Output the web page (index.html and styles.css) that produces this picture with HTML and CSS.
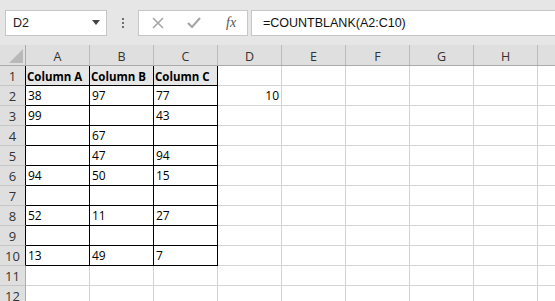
FILE: index.html
```html
<!DOCTYPE html>
<html lang="en">
<head>
<meta charset="UTF-8">
<title>COUNTBLANK</title>
<link rel="stylesheet" href="styles.css">
</head>
<body>
    <div class="toolbar">
        <div class="namebox">
            <span>D2</span>
            <svg class="caret" width="8" height="5" viewBox="0 0 8 5"><path d="M0 0h8L4 5z" fill="#444"/></svg>
        </div>
        <div class="grip"><i></i><i></i><i></i></div>
        <div class="icons">
            <svg width="14" height="14" viewBox="0 0 14 14"><path d="M2 2l10 10M12 2L2 12" stroke="#a6a6a6" stroke-width="1.6"/></svg>
            <svg width="16" height="14" viewBox="0 0 16 14"><path d="M2 7l4 4 8-9" stroke="#a6a6a6" stroke-width="2.2" fill="none"/></svg>
            <span class="fx">fx</span>
        </div>
        <div class="formula">=COUNTBLANK(A2:C10)</div>
    </div>

    <div class="sheet">
        <div class="row head">
            <div class="rh corner"><svg width="16" height="16" viewBox="0 0 16 16"><path d="M16 2V16H2z" fill="#b9b9b9"/></svg></div>
            <div class="c">A</div><div class="c">B</div><div class="c">C</div><div class="c">D</div>
            <div class="c">E</div><div class="c">F</div><div class="c">G</div><div class="c">H</div><div class="c end"></div>
        </div>
        <div class="row">
            <div class="rh in">1</div>
            <div class="c t th">Column A</div><div class="c t th">Column B</div><div class="c t th">Column C</div>
            <div class="c"></div><div class="c"></div><div class="c"></div><div class="c"></div><div class="c"></div><div class="c end"></div>
        </div>
        <div class="row">
            <div class="rh in">2</div>
            <div class="c t">38</div><div class="c t">97</div><div class="c t">77</div>
            <div class="c num">10</div><div class="c"></div><div class="c"></div><div class="c"></div><div class="c"></div><div class="c end"></div>
        </div>
        <div class="row">
            <div class="rh in">3</div>
            <div class="c t">99</div><div class="c t"></div><div class="c t">43</div>
            <div class="c"></div><div class="c"></div><div class="c"></div><div class="c"></div><div class="c"></div><div class="c end"></div>
        </div>
        <div class="row">
            <div class="rh in">4</div>
            <div class="c t"></div><div class="c t">67</div><div class="c t"></div>
            <div class="c"></div><div class="c"></div><div class="c"></div><div class="c"></div><div class="c"></div><div class="c end"></div>
        </div>
        <div class="row">
            <div class="rh in">5</div>
            <div class="c t"></div><div class="c t">47</div><div class="c t">94</div>
            <div class="c"></div><div class="c"></div><div class="c"></div><div class="c"></div><div class="c"></div><div class="c end"></div>
        </div>
        <div class="row">
            <div class="rh in">6</div>
            <div class="c t">94</div><div class="c t">50</div><div class="c t">15</div>
            <div class="c"></div><div class="c"></div><div class="c"></div><div class="c"></div><div class="c"></div><div class="c end"></div>
        </div>
        <div class="row">
            <div class="rh in">7</div>
            <div class="c t"></div><div class="c t"></div><div class="c t"></div>
            <div class="c"></div><div class="c"></div><div class="c"></div><div class="c"></div><div class="c"></div><div class="c end"></div>
        </div>
        <div class="row">
            <div class="rh in">8</div>
            <div class="c t">52</div><div class="c t">11</div><div class="c t">27</div>
            <div class="c"></div><div class="c"></div><div class="c"></div><div class="c"></div><div class="c"></div><div class="c end"></div>
        </div>
        <div class="row">
            <div class="rh in">9</div>
            <div class="c t"></div><div class="c t"></div><div class="c t"></div>
            <div class="c"></div><div class="c"></div><div class="c"></div><div class="c"></div><div class="c"></div><div class="c end"></div>
        </div>
        <div class="row">
            <div class="rh in">10</div>
            <div class="c t">13</div><div class="c t">49</div><div class="c t">7</div>
            <div class="c"></div><div class="c"></div><div class="c"></div><div class="c"></div><div class="c"></div><div class="c end"></div>
        </div>
        <div class="row">
            <div class="rh">11</div>
            <div class="c"></div><div class="c"></div><div class="c"></div>
            <div class="c"></div><div class="c"></div><div class="c"></div><div class="c"></div><div class="c"></div><div class="c end"></div>
        </div>
        <div class="row">
            <div class="rh">12</div>
            <div class="c"></div><div class="c"></div><div class="c"></div>
            <div class="c"></div><div class="c"></div><div class="c"></div><div class="c"></div><div class="c"></div><div class="c end"></div>
        </div>
    </div>
</body>
</html>
```

FILE: styles.css
```css
body {
    margin: 0;
    width: 555px;
    height: 301px;
    overflow: hidden;
    background-color: #fff;
    font-family: "Open Sans", sans-serif;
}

.toolbar {
    display: flex;
    align-items: center;
    height: 45px;
    padding: 0 0 0 5px;
    box-sizing: border-box;
    background-color: #e6e6e6;
}

.namebox,
.icons,
.formula {
    height: 26px;
    box-sizing: border-box;
    border: 1px solid #c6c6c6;
    background-color: #fff;
    display: flex;
    align-items: center;
}

.namebox {
    width: 102px;
    padding: 0 6px 0 7px;
    justify-content: space-between;
    font-family: "Liberation Sans", sans-serif;
    font-size: 12.5px;
    color: #222;
}

.grip {
    width: 31px;
    display: flex;
    flex-direction: column;
    align-items: center;
    gap: 2px;
}

.grip i {
    width: 2px;
    height: 2px;
    background-color: #6d6d6d;
}

.icons {
    width: 110px;
    padding: 0 0 0 12px;
    gap: 21px;
}

.fx {
    font-family: "Liberation Serif", serif;
    font-style: italic;
    font-size: 14px;
    color: #555;
    margin-left: 3px;
}

.formula {
    flex: 1;
    margin-left: 3px;
    border-right: none;
    padding-left: 11px;
    font-family: "Liberation Sans", sans-serif;
    font-size: 12.5px;
    color: #111;
}

.row {
    display: flex;
    height: 20px;
}

.row.head {
    height: 21px;
    background-color: #dfdfdf;
    border-bottom: 1px solid #ababab;
    box-sizing: border-box;
}

.rh {
    width: 26px;
    flex: none;
    box-sizing: border-box;
    background-color: #dfdfdf;
    border-right: 1px solid #ababab;
    border-bottom: 1px solid #c6c6c6;
    font-size: 13px;
    color: #333;
    display: flex;
    align-items: flex-end;
    justify-content: center;
    padding-bottom: 0;
}

.rh.in {
    border-right-color: #000;
}

.rh.corner {
    border-bottom: none;
    align-items: flex-end;
    justify-content: flex-end;
    padding: 0 2px 2px 0;
}

.c {
    width: 64px;
    flex: none;
    box-sizing: border-box;
    border-right: 1px solid #d4d4d4;
    border-bottom: 1px solid #d4d4d4;
    font-size: 12px;
    color: #000;
    display: flex;
    align-items: flex-end;
    padding: 0 2px 1px 2px;
}

.c.end {
    flex: 1;
    border-right: none;
}

.head .c {
    border-bottom: none;
    border-right-color: #bcbcbc;
    justify-content: center;
    align-items: center;
    font-size: 12.5px;
    color: #333;
    padding: 2px 0 0;
}

.c.t {
    border-right-color: #000;
    border-bottom-color: #000;
}

.c.th {
    font-weight: 700;
    font-size: 11.5px;
    background-color: #e7e6e6;
    padding-left: 1px;
}

.c.num {
    justify-content: flex-end;
}
```
